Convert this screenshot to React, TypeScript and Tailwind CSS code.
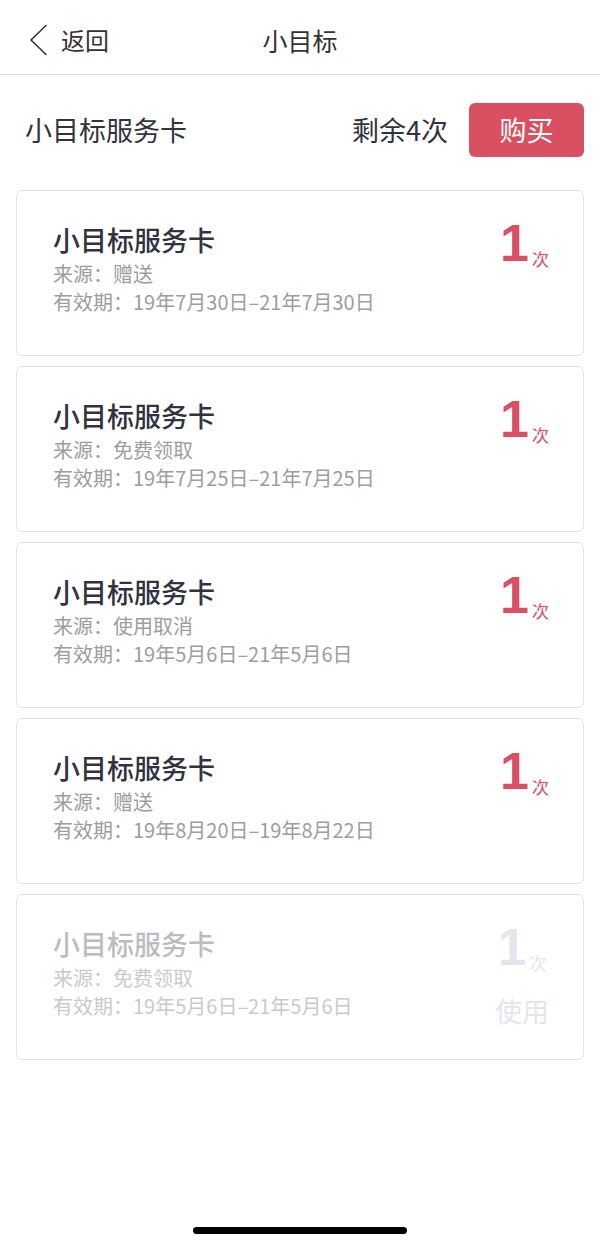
interface Card {
  source: string;
  period: string;
  count: number;
  used?: boolean;
}

const cards: Card[] = [
  { source: "赠送", period: "19年7月30日–21年7月30日", count: 1 },
  { source: "免费领取", period: "19年7月25日–21年7月25日", count: 1 },
  { source: "使用取消", period: "19年5月6日–21年5月6日", count: 1 },
  { source: "赠送", period: "19年8月20日–19年8月22日", count: 1 },
  { source: "免费领取", period: "19年5月6日–21年5月6日", count: 1, used: true },
];

const font = { fontFamily: '"Noto Sans CJK SC", "Noto Sans", sans-serif' };

function ServiceCard({ card }: { card: Card }) {
  const faded = card.used;
  return (
    <div className="flex h-[166px] justify-between rounded-md border border-[#e4e4e6] bg-white pl-[36px] pr-[34px]">
      <div className="pt-[33px]">
        <div
          className={`text-[27px] font-medium leading-[32px] ${faded ? "text-[#bcbcc0]" : "text-[#33323f]"}`}
        >
          小目标服务卡
        </div>
        <div
          className={`mt-1 text-[20px] leading-[28px] ${faded ? "text-[#cacaca]" : "text-[#9d9d9d]"}`}
        >
          来源：{card.source}
        </div>
        <div
          className={`text-[20px] leading-[28px] ${faded ? "text-[#cacaca]" : "text-[#9d9d9d]"}`}
        >
          有效期：{card.period}
        </div>
      </div>
      <div className="flex flex-col items-center pt-[26px]">
        <div
          className={`flex items-baseline ${faded ? "text-[#e3e6ee]" : "text-[#d94f66]"}`}
        >
          <span
            className="text-[52px] font-bold leading-[52px]"
            style={{ fontFamily: '"Liberation Sans", Arial, sans-serif' }}
          >
            {card.count}
          </span>
          <span className="relative top-[5px] ml-[3px] text-[17px] leading-none">次</span>
        </div>
        {faded && (
          <div className="mt-[22px] text-[27px] leading-[32px] text-[#e3e6ee]">使用</div>
        )}
      </div>
    </div>
  );
}

export default function App() {
  return (
    <div className="flex h-[1243px] w-[600px] flex-col bg-white" style={font}>
      <header className="relative flex h-[75px] items-center border-b border-[#dcdcdc] pt-[6px]">
        <div className="flex items-center pl-[29px] text-[#333]">
          <svg width="19" height="32" viewBox="0 0 19 32" fill="none">
            <path d="M17 1.5 L2 16 L17 30.5" stroke="#333" strokeWidth="1.6" strokeLinecap="round" strokeLinejoin="round" />
          </svg>
          <span className="ml-[13px] text-[24px]">返回</span>
        </div>
        <div className="absolute left-1/2 top-[6px] flex h-[69px] -translate-x-1/2 items-center text-[25px] text-[#333]">
          小目标
        </div>
      </header>

      <div className="flex items-center justify-between pl-[25px] pr-[16px] pt-[28px]">
        <span className="text-[27px] text-[#333340]">小目标服务卡</span>
        <div className="flex items-center">
          <span className="text-[27px] text-[#333340]">剩余4次</span>
          <button className="ml-[21px] h-[54px] w-[115px] rounded-md bg-[#d95062] text-[27px] text-white">
            购买
          </button>
        </div>
      </div>

      <main className="mt-[33px] flex flex-col gap-[10px] px-[16px]">
        {cards.map((c, i) => (
          <ServiceCard key={i} card={c} />
        ))}
      </main>

      <div className="mt-auto flex justify-center pb-[9px]">
        <div className="h-[7px] w-[214px] rounded-full bg-black" />
      </div>
    </div>
  );
}
